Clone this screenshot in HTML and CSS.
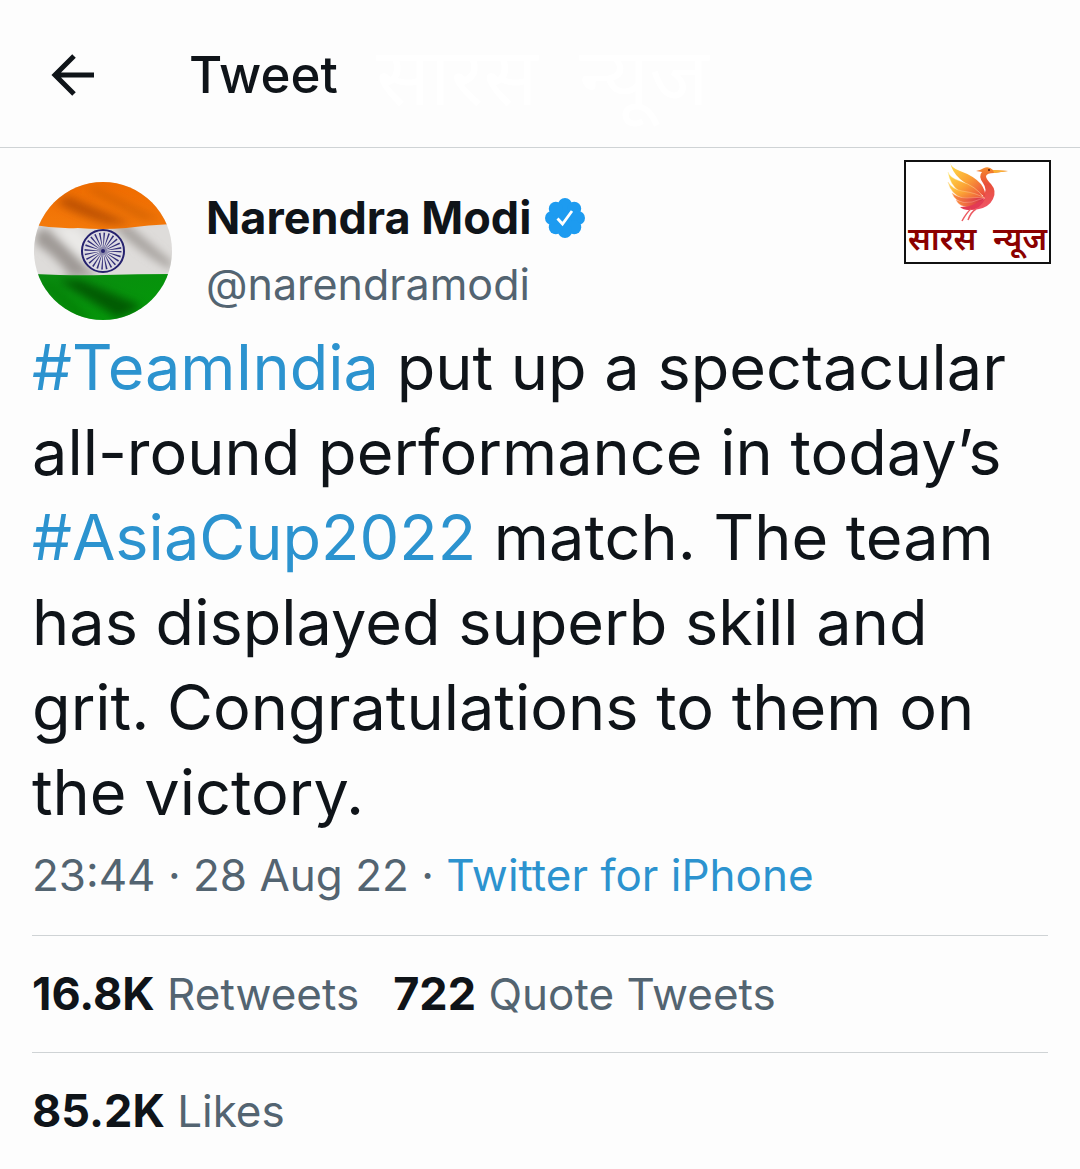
FILE: index.html
```html
<!DOCTYPE html>
<html lang="en">
<head>
  <meta charset="UTF-8">
  <meta name="viewport" content="width=device-width, initial-scale=1.0">
  <title>Tweet</title>
  <link rel="stylesheet" href="styles.css">
</head>
<body>
  <header class="topbar">
    <button class="back" type="button" aria-label="Back">
      <svg viewBox="0 0 44 44" width="44" height="44" fill="none" stroke="currentColor" stroke-width="5">
        <path d="M43 22H5M23 3L4 22L23 41"/>
      </svg>
    </button>
    <h1>Tweet</h1>
    <span class="watermark" lang="hi">सारस&nbsp; न्यूज</span>
  </header>

  <main class="tweet">
    <div class="author">
      <svg class="avatar" viewBox="0 0 138 138" role="img" aria-label="Flag of India">
        <defs>
          <clipPath id="round"><circle cx="69" cy="69" r="69"/></clipPath>
          <linearGradient id="saffron" x1="0.3" y1="0" x2="0.1" y2="1">
            <stop offset="0" stop-color="#ef6c00"/>
            <stop offset="1" stop-color="#f47a0a"/>
          </linearGradient>
          <linearGradient id="green" x1="0" y1="0" x2="1" y2="1">
            <stop offset="0" stop-color="#0a8a10"/>
            <stop offset="1" stop-color="#039a08"/>
          </linearGradient>
          <filter id="soft"><feGaussianBlur stdDeviation="4"/></filter>
        </defs>
        <g clip-path="url(#round)">
          <rect width="138" height="138" fill="#dedcda"/>
          <g filter="url(#soft)">
            <path d="M2 50L12 46L64 94L36 94Q22 74 2 62Z" fill="#8f8a86" opacity=".8"/>
            <path d="M78 44L96 44L138 80V88Q110 74 78 44Z" fill="#918b87" opacity=".7"/>
            <path d="M22 46L42 46L64 72L56 88Z" fill="#f4f3f2" opacity=".6"/>
          </g>
          <path d="M0 0H138V42Q114 43 92 46Q68 48 44 46Q22 47 0 43Z" fill="url(#saffron)"/>
          <path d="M0 92Q40 94 70 93Q104 92 138 92V138H0Z" fill="url(#green)"/>
          <g filter="url(#soft)">
            <path d="M22 20L34 14L98 42L74 42Q44 34 22 20Z" fill="#a84400" opacity=".7"/>
            <path d="M50 6L64 6L128 38L108 38Z" fill="#b85400" opacity=".45"/>
            <path d="M24 98L46 98L108 124L84 136Z" fill="#034d05" opacity=".8"/>
            <path d="M6 100L16 100L60 138L44 138Z" fill="#07700b" opacity=".5"/>
          </g>
          <circle cx="69" cy="69" r="21" fill="#dddbe2" stroke="#26226e" stroke-width="2"/>
          <circle cx="69" cy="69" r="11" fill="none" stroke="#34307a" stroke-width="15" stroke-dasharray="1 1.88"/>
          <circle cx="69" cy="69" r="4" fill="#8a88ac"/>
          <circle cx="69" cy="69" r="2" fill="#26226e"/>
        </g>
      </svg>
      <div class="names">
        <div class="name">
          <strong>Narendra Modi</strong>
          <svg class="verified" viewBox="0 0 40 40" role="img" aria-label="Verified">
            <g fill="#1d9bf0">
              <circle cx="20" cy="20" r="15"/>
              <circle cx="20" cy="7" r="7"/>
              <circle cx="29.2" cy="10.8" r="7"/>
              <circle cx="33" cy="20" r="7"/>
              <circle cx="29.2" cy="29.2" r="7"/>
              <circle cx="20" cy="33" r="7"/>
              <circle cx="10.8" cy="29.2" r="7"/>
              <circle cx="7" cy="20" r="7"/>
              <circle cx="10.8" cy="10.8" r="7"/>
            </g>
            <path d="M12.500 20.500L17.500 26L27 13" fill="none" stroke="#fff" stroke-width="2.800"/>
          </svg>
        </div>
        <div class="handle">@narendramodi</div>
      </div>
      <div class="brand">
        <svg class="bird" viewBox="0 0 62 60" aria-hidden="true">
          <defs>
            <linearGradient id="wing" x1="0" y1="0" x2="1" y2="1">
              <stop offset="0" stop-color="#ffe14a"/>
              <stop offset=".5" stop-color="#fba235"/>
              <stop offset="1" stop-color="#e8433f"/>
            </linearGradient>
            <linearGradient id="lower" x1="0" y1="0" x2="1" y2="0">
              <stop offset="0" stop-color="#fb8f3a"/>
              <stop offset="1" stop-color="#d3264b"/>
            </linearGradient>
            <linearGradient id="neck" x1="0" y1="0" x2="0" y2="1">
              <stop offset="0" stop-color="#f58a2c"/>
              <stop offset=".4" stop-color="#e8503a"/>
              <stop offset="1" stop-color="#f0556a"/>
            </linearGradient>
          </defs>
          <path d="M29 9Q34 8 37 6Q42 4 46 8L61 9L47 11Q40 11 39 14Q39 17 44 22Q50 29 46 37Q42 45 32 47Q24 49 18 47Q30 43 36 34Q41 28 36 21Q31 14 35 10Z" fill="url(#neck)"/>
          <path d="M46 8L61 9L47 11Z" fill="#f9b233"/>
          <circle cx="42" cy="8" r="1" fill="#4a1a10"/>
          <path d="M3 0Q4 6 13 9Q27 14 34 22Q39 29 38 35Q24 26 13 17Q5 10 3 0Z" fill="url(#wing)"/>
          <path d="M1 10Q3 16 13 19Q29 24 37 36Q23 35 12 29Q3 23 1 10Z" fill="url(#wing)" stroke="#fff0b0" stroke-width=".4"/>
          <path d="M1 20Q5 27 15 29Q30 31 37 36Q27 40 15 36Q4 32 1 20Z" fill="url(#wing)" stroke="#ffd9a0" stroke-width=".4"/>
          <path d="M5 31Q11 36 20 36Q31 35 38 36Q28 43 17 41Q8 39 5 31Z" fill="url(#lower)" stroke="#ffc09a" stroke-width=".4"/>
          <path d="M9 38Q17 42 25 40Q33 37 38 36Q30 46 20 45Q12 44 9 38Z" fill="url(#lower)" stroke="#ffb0a0" stroke-width=".4"/>
          <path d="M13 45Q22 45 28 42Q33 39 38 37Q34 47 22 48Q16 48 13 45Z" fill="#e23b55"/>
          <path d="M24 47Q20 50 15 59M29 47Q24 50 21 58" stroke="#ec5b62" stroke-width="1.500" fill="none"/>
        </svg>
        <span lang="hi">सारस&nbsp; न्यूज</span>
      </div>
    </div>

    <p class="text"><a href="#">#TeamIndia</a> put up a spectacular all-round performance in today’s <a href="#">#AsiaCup2022</a> match. The team has displayed superb skill and grit. Congratulations to them on the victory.</p>

    <p class="meta">23:44 · 28 Aug 22 · <a href="#">Twitter for iPhone</a></p>

    <div class="stats">
      <span><strong>16.8K</strong> Retweets</span>
      <span><strong>722</strong> Quote Tweets</span>
    </div>
    <div class="stats">
      <span><strong>85.2K</strong> Likes</span>
    </div>
  </main>
</body>
</html>
```
FILE: styles.css
```css
* {
  box-sizing: border-box;
}
body {
  margin: 0;
  font-family: Inter, "Liberation Sans", sans-serif;
  font-size: 44px;
  line-height: 56px;
  background-color: #fdfdfd;
  color: #0f1419;
}
a {
  color: #2c93cf;
  text-decoration: none;
}
/* top bar */
.topbar {
  position: relative;
  display: flex;
  align-items: center;
  gap: 94px;
  height: 148px;
  padding: 2px 51px 0;
  border-bottom: 1px solid #cfd3d5;
}
.back {
  display: flex;
  padding: 0;
  border: none;
  background: none;
  color: #0f1419;
  cursor: pointer;
}
h1 {
  margin: 0;
  font-size: 51px;
  font-weight: 500;
}
.watermark {
  position: absolute;
  top: 34px;
  left: 376px;
  font-family: "Noto Sans", sans-serif;
  font-size: 80px;
  line-height: 80px;
  color: #ffffff;
}
/* tweet */
.tweet {
  padding: 34px 32px 0;
}
.author {
  display: flex;
  align-items: center;
  gap: 34px;
  padding-left: 2px;
}
.avatar {
  width: 138px;
  height: 138px;
  flex: none;
}
.names {
  flex: 1;
  line-height: 67px;
}
.name {
  display: flex;
  align-items: center;
  gap: 14px;
}
.verified {
  width: 40px;
  height: 40px;
}
.handle {
  font-size: 43px;
}
.handle,
.meta,
.stats {
  color: #536471;
}
.brand {
  align-self: flex-start;
  display: flex;
  flex-direction: column;
  align-items: center;
  width: 147px;
  height: 104px;
  margin: -22px -3px 0 0;
  border: 2px solid #111111;
  background-color: #ffffff;
  color: #8b0000;
  font-family: "Noto Sans", sans-serif;
  font-size: 32px;
  font-weight: 600;
  line-height: 32px;
  white-space: nowrap;
}
.bird {
  width: 62px;
  height: 60px;
  flex: none;
}
.text {
  margin: 5px 0 12px;
  font-size: 63px;
  line-height: 85px;
}
.meta {
  margin: 0 0 32px;
}
.stats {
  display: flex;
  flex-wrap: wrap;
  gap: 34px;
  padding: 30px 0;
  border-top: 1px solid #cfd3d5;
}
strong {
  font-size: 45px;
  font-weight: 700;
  color: #0f1419;
}
```
